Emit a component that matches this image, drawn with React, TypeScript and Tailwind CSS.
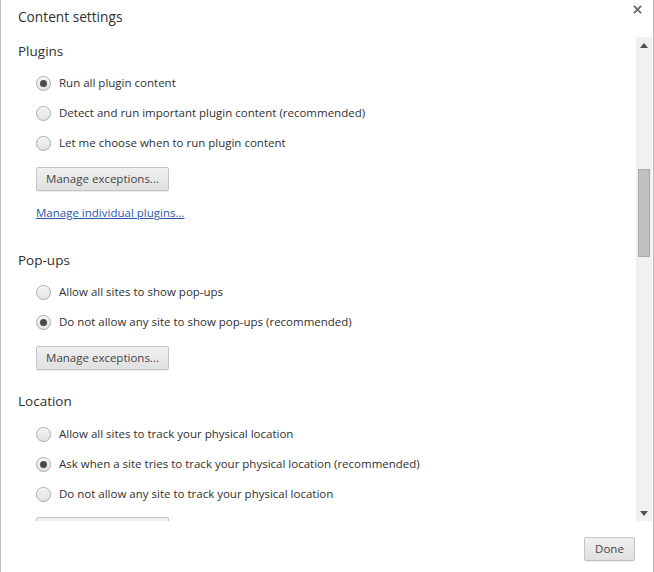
import React from 'react';

type Option = { label: string; checked?: boolean };

function Radio({ label, checked }: Option) {
  return (
    <div className="flex h-[30px] items-center pl-[35px]">
      <span className="flex h-[15px] w-[15px] shrink-0 items-center justify-center rounded-full border border-[#aaaaaa] bg-gradient-to-b from-[#f2f2f2] to-[#e4e4e4] shadow-[inset_0_1px_0_#fff]">
        {checked && <span className="h-[7px] w-[7px] rounded-full bg-[#4a4a4a]" />}
      </span>
      <span className="ml-[8px] whitespace-nowrap text-[11.5px] text-[#303030]">{label}</span>
    </div>
  );
}

function Button({ children, className = '' }: { children: React.ReactNode; className?: string }) {
  return (
    <button
      className={`flex h-[24px] items-center justify-center whitespace-nowrap rounded-[2px] border border-[#c4c4c4] bg-gradient-to-b from-[#f0f0f0] to-[#e0e0e0] px-[10px] text-[11.5px] text-[#444] shadow-[0_1px_0_rgba(0,0,0,0.08)] ${className}`}
    >
      {children}
    </button>
  );
}

function Heading({ children, className = '' }: { children: React.ReactNode; className?: string }) {
  return (
    <div className={`flex h-[28px] items-center pl-[17px] text-[13.5px] text-[#303030] ${className}`}>{children}</div>
  );
}

function Scrollbar() {
  return (
    <div className="flex w-[16px] shrink-0 flex-col items-center bg-[#f1f1f1]">
      <div className="flex h-[16px] w-full items-center justify-center">
        <svg width="8" height="5" viewBox="0 0 8 5">
          <path d="M0 5 L4 0 L8 5 Z" fill="#505050" />
        </svg>
      </div>
      <div className="mt-[116px] h-[88px] w-[12px] border border-[#a9a9a9] bg-[#c1c1c1]" />
      <div className="flex-1" />
      <div className="flex h-[16px] w-full items-center justify-center">
        <svg width="8" height="5" viewBox="0 0 8 5">
          <path d="M0 0 L8 0 L4 5 Z" fill="#505050" />
        </svg>
      </div>
    </div>
  );
}

export default function App() {
  return (
    <div
      className="relative flex h-[572px] w-[654px] flex-col border-x border-[#bdbdbd] bg-white"
      style={{ fontFamily: '"Open Sans", "Noto Sans", sans-serif' }}
    >
      <div className="flex h-[37px] items-center pl-[17px] pb-[3px] text-[13.7px] text-[#303030]">Content settings</div>
      <button className="absolute right-[9px] top-[2px] flex h-[14px] w-[14px] items-center justify-center">
        <svg width="9" height="9" viewBox="0 0 10 10">
          <path d="M1 1 L9 9 M9 1 L1 9" stroke="#6e6e6e" strokeWidth="2.2" />
        </svg>
      </button>

      <div className="flex h-[484px]">
        <div className="flex-1 overflow-hidden">
          <Heading>Plugins</Heading>
          <div className="mt-[3px]">
            <Radio label="Run all plugin content" checked />
            <Radio label="Detect and run important plugin content (recommended)" />
            <Radio label="Let me choose when to run plugin content" />
          </div>
          <Button className="ml-[35px] mt-[9px] w-[133px]">Manage exceptions...</Button>
          <div className="ml-[35px] mt-[10px] flex h-[24px] items-center">
            <a className="cursor-pointer text-[11.5px] text-[#2a56a8] underline">Manage individual plugins...</a>
          </div>

          <Heading className="mt-[21px]">Pop-ups</Heading>
          <div className="mt-[3px]">
            <Radio label="Allow all sites to show pop-ups" />
            <Radio label="Do not allow any site to show pop-ups (recommended)" checked />
          </div>
          <Button className="ml-[35px] mt-[9px] w-[133px]">Manage exceptions...</Button>

          <Heading className="mt-[17px]">Location</Heading>
          <div className="mt-[4px]">
            <Radio label="Allow all sites to track your physical location" />
            <Radio label="Ask when a site tries to track your physical location (recommended)" checked />
            <Radio label="Do not allow any site to track your physical location" />
          </div>
          <Button className="ml-[35px] mt-[8px] w-[133px]">Manage exceptions...</Button>
        </div>
        <Scrollbar />
        <div className="w-[1px]" />
      </div>

      <div className="flex flex-1 items-start justify-end pr-[18px] pt-[16px]">
        <Button className="w-[51px] px-0">Done</Button>
      </div>
    </div>
  );
}
